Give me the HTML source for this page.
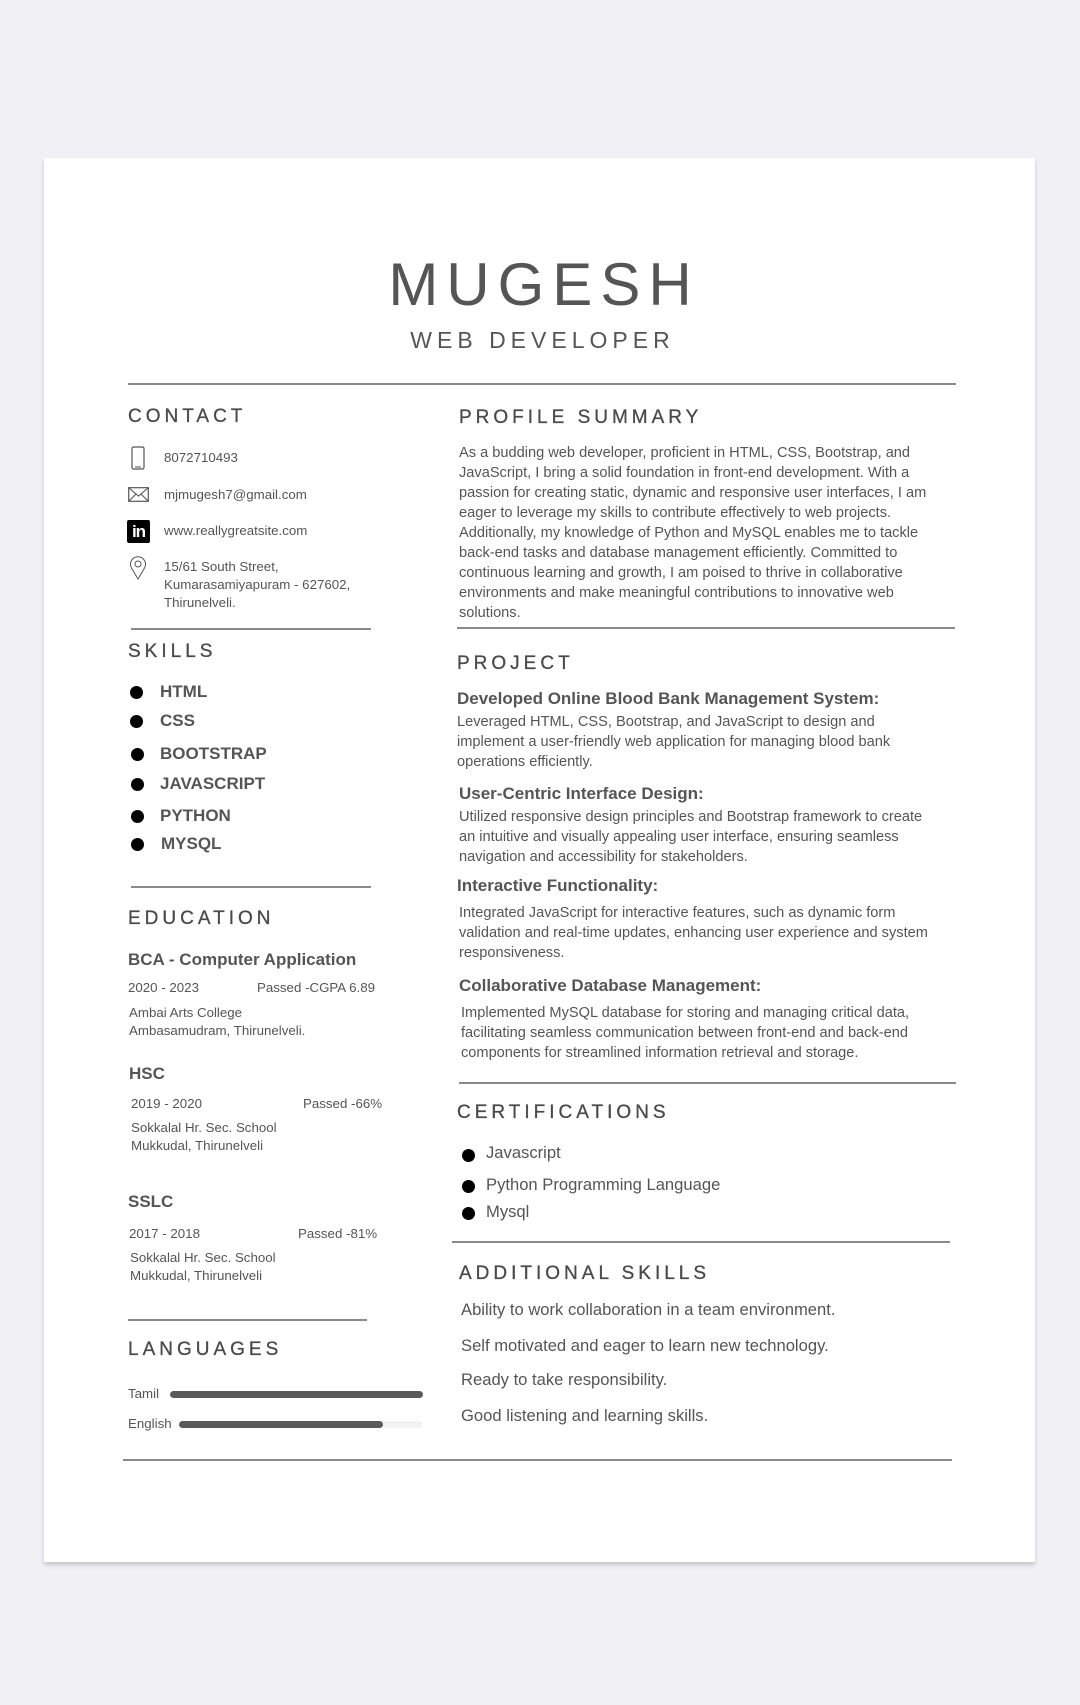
<!DOCTYPE html>
<html><head><meta charset="utf-8"><style>
*{margin:0;padding:0;box-sizing:border-box}
body{width:1080px;height:1705px;background:#f0f0f5;position:relative;font-family:"Liberation Sans",Arial,sans-serif;color:#555;overflow:hidden}
.card{position:absolute;left:44px;top:158px;width:991px;height:1404px;background:#fff;box-shadow:0 3px 4px rgba(0,0,0,.18)}
.t{position:absolute;white-space:nowrap;line-height:20px}
.h{font-size:19px;letter-spacing:4px;color:#4a4a4a;line-height:24px;-webkit-text-stroke:0.3px #4a4a4a}
.b{font-weight:bold;font-size:17px}
.s{font-size:13.3px}
.p{font-size:14.6px}
.ln{position:absolute;height:2px;background:#8a8a8a}
.dot{position:absolute;width:13px;height:13px;border-radius:50%;background:#000}
.q{font-size:16.6px}
</style></head><body>
<div class="card"></div>
<div class="t" style="left:0;width:1080px;text-align:center;top:250px;font-size:60px;line-height:70px;letter-spacing:8px;padding-left:8px">MUGESH</div>
<div class="t" style="left:0;width:1080px;text-align:center;top:325px;font-size:23px;line-height:30px;letter-spacing:5px;padding-left:5px">WEB DEVELOPER</div>
<div class="ln" style="left:128px;top:383px;width:828px"></div>

<!-- left -->
<div class="t h" style="left:128px;top:405px">CONTACT</div>
<svg style="position:absolute;left:131px;top:446px" width="14" height="24" viewBox="0 0 14 24"><rect x="1" y="1" width="12" height="22" rx="1.5" fill="none" stroke="#555" stroke-width="1.2"/><line x1="4" y1="21" x2="10" y2="21" stroke="#555"/></svg>
<div class="t s" style="left:164px;top:448px">8072710493</div>
<svg style="position:absolute;left:128px;top:487px" width="21" height="15" viewBox="0 0 21 15"><rect x="0.7" y="0.7" width="19.6" height="13.6" fill="none" stroke="#555" stroke-width="1.2"/><path d="M1 1 L10.5 9 L20 1 M1 14 L8 7 M20 14 L13 7" fill="none" stroke="#555" stroke-width="1.1"/></svg>
<div class="t s" style="left:164px;top:485px">mjmugesh7@gmail.com</div>
<div style="position:absolute;left:127px;top:520px;width:23px;height:23px;background:#000;border-radius:2px;color:#fff;font-weight:bold;font-size:17px;line-height:23px;text-align:center;letter-spacing:-1px">in</div>
<div class="t s" style="left:164px;top:521px">www.reallygreatsite.com</div>
<svg style="position:absolute;left:129px;top:556px" width="18" height="24" viewBox="0 0 18 24"><path d="M9 23 L2.5 12 A7.5 7.5 0 1 1 15.5 12 Z" fill="none" stroke="#555" stroke-width="1"/><circle cx="9" cy="8" r="3" fill="none" stroke="#555" stroke-width="1"/></svg>
<div class="t s" style="left:164px;top:558px;line-height:18px">15/61 South Street,<br>Kumarasamiyapuram - 627602,<br>Thirunelveli.</div>
<div class="ln" style="left:131px;top:628px;width:240px"></div>

<div class="t h" style="left:128px;top:640px">SKILLS</div>
<div class="dot" style="left:130px;top:686px"></div><div class="t b" style="left:160px;top:682px">HTML</div>
<div class="dot" style="left:130px;top:715px"></div><div class="t b" style="left:160px;top:711px">CSS</div>
<div class="dot" style="left:131px;top:748px"></div><div class="t b" style="left:160px;top:744px">BOOTSTRAP</div>
<div class="dot" style="left:131px;top:778px"></div><div class="t b" style="left:160px;top:774px">JAVASCRIPT</div>
<div class="dot" style="left:131px;top:810px"></div><div class="t b" style="left:160px;top:806px">PYTHON</div>
<div class="dot" style="left:131px;top:838px"></div><div class="t b" style="left:161px;top:834px">MYSQL</div>
<div class="ln" style="left:131px;top:886px;width:240px"></div>

<div class="t h" style="left:128px;top:907px">EDUCATION</div>
<div class="t b" style="left:128px;top:950px">BCA - Computer Application</div>
<div class="t s" style="left:128px;top:978px">2020 - 2023</div><div class="t s" style="left:257px;top:978px">Passed -CGPA 6.89</div>
<div class="t s" style="left:129px;top:1004px;line-height:18px">Ambai Arts College<br>Ambasamudram, Thirunelveli.</div>
<div class="t b" style="left:129px;top:1064px">HSC</div>
<div class="t s" style="left:131px;top:1094px">2019 - 2020</div><div class="t s" style="left:303px;top:1094px">Passed -66%</div>
<div class="t s" style="left:131px;top:1119px;line-height:18px">Sokkalal Hr. Sec. School<br>Mukkudal, Thirunelveli</div>
<div class="t b" style="left:128px;top:1192px">SSLC</div>
<div class="t s" style="left:129px;top:1224px">2017 - 2018</div><div class="t s" style="left:298px;top:1224px">Passed -81%</div>
<div class="t s" style="left:130px;top:1249px;line-height:18px">Sokkalal Hr. Sec. School<br>Mukkudal, Thirunelveli</div>
<div class="ln" style="left:128px;top:1319px;width:239px"></div>

<div class="t h" style="left:128px;top:1338px">LANGUAGES</div>
<div class="t s" style="left:128px;top:1384px">Tamil</div>
<div style="position:absolute;left:170px;top:1391px;width:253px;height:7px;border-radius:4px;background:#5a5a5a"></div>
<div class="t s" style="left:128px;top:1414px">English</div>
<div style="position:absolute;left:179px;top:1421px;width:244px;height:7px;border-radius:4px;background:#f3f3f3"></div>
<div style="position:absolute;left:179px;top:1421px;width:204px;height:7px;border-radius:4px;background:#5a5a5a"></div>
<div class="ln" style="left:123px;top:1459px;width:829px"></div>

<!-- right -->
<div class="t h" style="left:459px;top:406px">PROFILE SUMMARY</div>
<div class="t p" style="left:459px;top:443px">As a budding web developer, proficient in HTML, CSS, Bootstrap, and<br>JavaScript, I bring a solid foundation in front-end development. With a<br>passion for creating static, dynamic and responsive user interfaces, I am<br>eager to leverage my skills to contribute effectively to web projects.<br>Additionally, my knowledge of Python and MySQL enables me to tackle<br>back-end tasks and database management efficiently. Committed to<br>continuous learning and growth, I am poised to thrive in collaborative<br>environments and make meaningful contributions to innovative web<br>solutions.</div>
<div class="ln" style="left:457px;top:627px;width:498px"></div>

<div class="t h" style="left:457px;top:652px">PROJECT</div>
<div class="t b" style="left:457px;top:689px">Developed Online Blood Bank Management System:</div>
<div class="t p" style="left:457px;top:712px">Leveraged HTML, CSS, Bootstrap, and JavaScript to design and<br>implement a user-friendly web application for managing blood bank<br>operations efficiently.</div>
<div class="t b" style="left:459px;top:784px">User-Centric Interface Design:</div>
<div class="t p" style="left:459px;top:807px">Utilized responsive design principles and Bootstrap framework to create<br>an intuitive and visually appealing user interface, ensuring seamless<br>navigation and accessibility for stakeholders.</div>
<div class="t b" style="left:457px;top:876px">Interactive Functionality:</div>
<div class="t p" style="left:459px;top:903px">Integrated JavaScript for interactive features, such as dynamic form<br>validation and real-time updates, enhancing user experience and system<br>responsiveness.</div>
<div class="t b" style="left:459px;top:976px">Collaborative Database Management:</div>
<div class="t p" style="left:461px;top:1003px">Implemented MySQL database for storing and managing critical data,<br>facilitating seamless communication between front-end and back-end<br>components for streamlined information retrieval and storage.</div>
<div class="ln" style="left:459px;top:1082px;width:497px"></div>

<div class="t h" style="left:457px;top:1101px">CERTIFICATIONS</div>
<div class="dot" style="left:462px;top:1149px"></div><div class="t q" style="left:486px;top:1143px">Javascript</div>
<div class="dot" style="left:462px;top:1180px"></div><div class="t q" style="left:486px;top:1175px">Python Programming Language</div>
<div class="dot" style="left:462px;top:1207px"></div><div class="t q" style="left:486px;top:1202px">Mysql</div>
<div class="ln" style="left:452px;top:1241px;width:498px"></div>

<div class="t h" style="left:459px;top:1262px">ADDITIONAL SKILLS</div>
<div class="t q" style="left:461px;top:1300px">Ability to work collaboration in a team environment.</div>
<div class="t q" style="left:461px;top:1336px">Self motivated and eager to learn new technology.</div>
<div class="t q" style="left:461px;top:1370px">Ready to take responsibility.</div>
<div class="t q" style="left:461px;top:1406px">Good listening and learning skills.</div>
</body></html>
